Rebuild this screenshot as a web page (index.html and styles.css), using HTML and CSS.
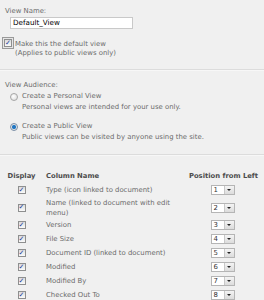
FILE: index.html
```html
<!DOCTYPE html>
<html lang="en">
<head>
    <meta charset="UTF-8">
    <title>Edit View</title>
    <link rel="stylesheet" href="styles.css">
</head>
<body>

    <div class="section name-section">
        <div class="label">View Name:</div>
        <div class="text-input">Default_View</div>

        <div class="check-row">
            <span class="check check-focus"><span class="check-box"><span class="tick">&#10003;</span></span></span>
            <div class="check-text">
                <div>Make this the default view</div>
                <div>(Applies to public views only)</div>
            </div>
        </div>
    </div>

    <div class="section audience-section">
        <div class="label">View Audience:</div>

        <div class="option">
            <span class="radio"></span>
            <div class="option-text">
                <div>Create a Personal View</div>
                <div>Personal views are intended for your use only.</div>
            </div>
        </div>

        <div class="option">
            <span class="radio radio-on"></span>
            <div class="option-text">
                <div>Create a Public View</div>
                <div>Public views can be visited by anyone using the site.</div>
            </div>
        </div>
    </div>

    <div class="section columns-section">
        <div class="col-table">
            <div class="col-row col-head">
                <div class="c-display">Display</div>
                <div class="c-name">Column Name</div>
                <div class="c-pos">Position from Left</div>
            </div>

            <div class="col-row">
                <div class="c-display"><span class="check-box"><span class="tick">&#10003;</span></span></div>
                <div class="c-name">Type (icon linked to document)</div>
                <div class="c-pos"><span class="pick"><span class="pick-val">1</span><span class="pick-btn"></span></span></div>
            </div>
            <div class="col-row">
                <div class="c-display"><span class="check-box"><span class="tick">&#10003;</span></span></div>
                <div class="c-name">Name (linked to document with edit menu)</div>
                <div class="c-pos"><span class="pick"><span class="pick-val">2</span><span class="pick-btn"></span></span></div>
            </div>
            <div class="col-row">
                <div class="c-display"><span class="check-box"><span class="tick">&#10003;</span></span></div>
                <div class="c-name">Version</div>
                <div class="c-pos"><span class="pick"><span class="pick-val">3</span><span class="pick-btn"></span></span></div>
            </div>
            <div class="col-row">
                <div class="c-display"><span class="check-box"><span class="tick">&#10003;</span></span></div>
                <div class="c-name">File Size</div>
                <div class="c-pos"><span class="pick"><span class="pick-val">4</span><span class="pick-btn"></span></span></div>
            </div>
            <div class="col-row">
                <div class="c-display"><span class="check-box"><span class="tick">&#10003;</span></span></div>
                <div class="c-name">Document ID (linked to document)</div>
                <div class="c-pos"><span class="pick"><span class="pick-val">5</span><span class="pick-btn"></span></span></div>
            </div>
            <div class="col-row">
                <div class="c-display"><span class="check-box"><span class="tick">&#10003;</span></span></div>
                <div class="c-name">Modified</div>
                <div class="c-pos"><span class="pick"><span class="pick-val">6</span><span class="pick-btn"></span></span></div>
            </div>
            <div class="col-row">
                <div class="c-display"><span class="check-box"><span class="tick">&#10003;</span></span></div>
                <div class="c-name">Modified By</div>
                <div class="c-pos"><span class="pick"><span class="pick-val">7</span><span class="pick-btn"></span></span></div>
            </div>
            <div class="col-row">
                <div class="c-display"><span class="check-box"><span class="tick">&#10003;</span></span></div>
                <div class="c-name">Checked Out To</div>
                <div class="c-pos"><span class="pick"><span class="pick-val">8</span><span class="pick-btn"></span></span></div>
            </div>
        </div>
    </div>

</body>
</html>
```

FILE: styles.css
```css
* {
    margin: 0;
    padding: 0;
    box-sizing: border-box;
}

body {
    font-family: 'DejaVu Sans', Verdana, sans-serif;
    font-size: 6.9px;
    color: #6b6b6b;
    background: #f0f0f0;
    overflow: hidden;
}

.section {
    border-bottom: 1px solid #dcdcdc;
    box-shadow: 0 1px 0 #f7f7f7;
}

.label {
    line-height: 11px;
    padding-left: 5px;
}

/* view name */
.name-section {
    padding-top: 6px;
    padding-bottom: 11px;
}

.text-input {
    margin-left: 10px;
    width: 123px;
    height: 12px;
    background: #fff;
    border: 1px solid #c9c9c9;
    color: #000;
    font-size: 7.2px;
    line-height: 10px;
    padding-left: 2px;
}

.check-row {
    display: flex;
    margin-top: 8px;
    padding-left: 2px;
}

.check-focus {
    display: flex;
    align-items: center;
    justify-content: center;
    width: 12px;
    height: 12px;
    border: 1px solid #9a9a9a;
    background: #e6e6e6;
    margin-right: 1px;
}

.check-text {
    line-height: 9px;
    padding-top: 3px;
}

.check-box {
    display: inline-flex;
    align-items: center;
    justify-content: center;
    width: 8px;
    height: 8px;
    border: 1px solid #8e8f8f;
    background: linear-gradient(#dcdcdc, #fafafa);
}

.tick {
    color: #21409a;
    font-size: 7px;
    line-height: 7px;
    font-weight: bold;
}

/* audience */
.audience-section {
    padding-top: 10px;
    padding-bottom: 11px;
}

.option {
    display: flex;
    padding-left: 10px;
}

.option + .option {
    margin-top: 8px;
}

.radio {
    width: 8px;
    height: 8px;
    margin-top: 2px;
    margin-right: 4px;
    border-radius: 50%;
    border: 1px solid #a6a6a6;
    background: radial-gradient(circle at 40% 40%, #fff, #d8d8d8);
    flex-shrink: 0;
}

.radio-on {
    border-color: #7b8fa6;
    background: radial-gradient(circle, #1e6fb8 0, #2a7ec9 1.8px, #e8e8e8 2.4px, #cfcfcf 100%);
}

.option-text {
    line-height: 11px;
}

/* columns */
.columns-section {
    border: none;
    box-shadow: none;
    padding-top: 14px;
}

.col-table {
    display: grid;
    padding: 0 2px 0 6px;
}

.col-row {
    display: grid;
    grid-template-columns: 31px 130px 77px;
    column-gap: 9px;
    align-items: center;
    height: 14px;
    line-height: 10px;
}

.col-row:nth-child(3) {
    height: 21px;
}

.col-head {
    font-weight: bold;
    color: #4c4c4c;
    font-size: 6.8px;
}

.c-display,
.c-pos {
    display: flex;
    justify-content: center;
    white-space: nowrap;
}

.pick {
    display: flex;
    width: 24px;
    height: 10px;
    border: 1px solid #b5b5b5;
    background: #fff;
    margin-left: -2px;
}

.pick-val {
    flex: 1;
    color: #333;
    line-height: 8px;
    padding-left: 2px;
}

.pick-btn {
    position: relative;
    width: 10px;
    border-left: 1px solid #c8c8c8;
    background: linear-gradient(#f4f4f4, #dcdcdc);
}

.pick-btn::after {
    content: "";
    position: absolute;
    left: 2.5px;
    top: 3px;
    border-left: 2px solid transparent;
    border-right: 2px solid transparent;
    border-top: 2px solid #222;
}
```
